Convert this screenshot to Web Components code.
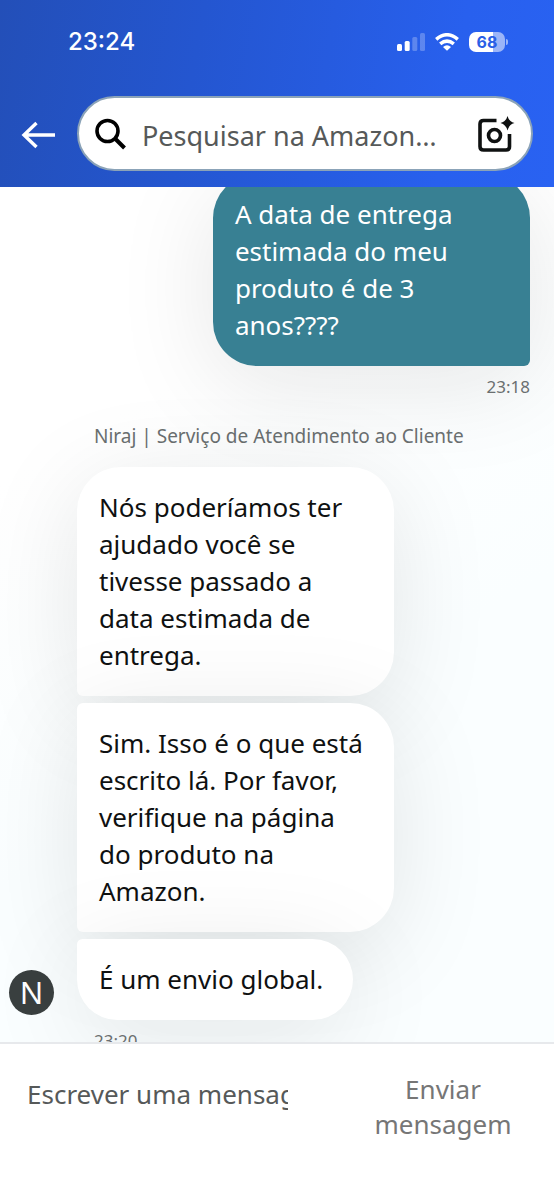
<!DOCTYPE html>
<html lang="pt-BR">
<head>
<meta charset="utf-8">
<meta name="viewport" content="width=device-width, initial-scale=1">
<title>Atendimento ao Cliente</title>
<style>
html, body { height: 100%; }
body { margin: 0; font-family: "Noto Sans", "Open Sans", sans-serif; color: #0f1111; background: #fff; }
</style>
</head>
<body>
<chat-app>
  <app-header slot="header">
    <status-bar time="23:24" battery="68"></status-bar>
    <search-bar placeholder="Pesquisar na Amazon…"></search-bar>
  </app-header>
  <chat-log slot="log">
    <chat-group side="out" time="23:18">
      <chat-bubble kind="out">A data de entrega estimada do meu produto é de 3 anos????</chat-bubble>
    </chat-group>
    <chat-group side="in" initial="N" author="Niraj | Serviço de Atendimento ao Cliente" time="23:20">
      <chat-bubble kind="first">Nós poderíamos ter ajudado você se tivesse passado a data estimada de entrega.</chat-bubble>
      <chat-bubble kind="middle">Sim. Isso é o que está escrito lá. Por favor, verifique na página do produto na Amazon.</chat-bubble>
      <chat-bubble kind="last">É um envio global.</chat-bubble>
    </chat-group>
  </chat-log>
  <message-composer slot="composer"></message-composer>
</chat-app>

<script>
const define = (name, render, ready) => customElements.define(name, class extends HTMLElement {
  connectedCallback() {
    if (this.shadowRoot) return;
    this.attachShadow({ mode: "open" }).innerHTML = render(this);
    if (ready) ready(this);
  }
});

define("chat-app", () => `
<style>
  :host { display: flex; flex-direction: column; height: 100vh; overflow: hidden; }
  main { flex: 1; min-height: 0; display: flex; flex-direction: column;
    background: linear-gradient(150deg, #fff 25%, #fafeff 60%); }
</style>
<slot name="header"></slot><main><slot name="log"></slot></main><slot name="composer"></slot>`);

define("app-header", () => `
<style>
  :host { display: block; flex: none; padding-bottom: 16px; color: #fff;
    background: linear-gradient(100deg, #234fb8 0%, #2456d0 35%, #2860ee 80%, #2962f2 100%); }
</style><slot></slot>`);

define("status-bar", el => `
<style>
  :host { display: flex; justify-content: space-between; align-items: center; height: 32px;
    padding: 26px 46px 38px 68px; font: 500 24px/32px Inter, sans-serif; }
  .icons { display: flex; align-items: center; gap: 10px; }
  svg { display: block; }
  .battery { display: flex; align-items: center; gap: 1px; }
  .level { width: 36px; height: 20px; border-radius: 7px; text-align: center; color: #2a5fe6;
    font: 700 16px/20px Inter, sans-serif; background: linear-gradient(90deg, #fff 68%, #9bb5f8 68%); }
  .tip { width: 2px; height: 6px; border-radius: 0 2px 2px 0; background: #9bb5f8; }
</style>
<span>${el.getAttribute("time")}</span>
<span class="icons">
  <svg width="28" height="18" viewBox="0 0 28 18" fill="#fff" aria-hidden="true">
    <rect x="0" y="11" width="5" height="7" rx="1.5"/><rect x="7.7" y="8" width="5" height="10" rx="1.5"/>
    <rect x="15.3" y="4" width="5" height="14" rx="1.5" opacity=".25"/><rect x="23" y="0" width="5" height="18" rx="1.5" opacity=".25"/>
  </svg>
  <svg width="24" height="18" viewBox="0 0 24 18" fill="none" stroke="#fff" stroke-width="3.5" aria-hidden="true">
    <path d="M1.2 6.3Q12-2.8 22.8 6.3"/><path d="M5.2 10.9Q12 5.3 18.8 10.9"/>
    <path d="M12 17.8 8 13.9Q12 10.7 16 13.9Z" fill="#fff" stroke="none"/>
  </svg>
  <span class="battery"><span class="level">${el.getAttribute("battery")}</span><span class="tip"></span></span>
</span>`);

define("search-bar", el => `
<style>
  :host { display: flex; align-items: center; gap: 21px; padding: 0 21px; }
  button { flex: none; border: 0; padding: 2px 0 0; background: none; color: inherit; }
  svg { display: block; }
  form { flex: 1; min-width: 0; box-sizing: border-box; height: 75px; display: flex; align-items: center;
    padding: 0 16px; border: 2px solid #8ba3b8; border-radius: 38px; background: #fff; color: #0f1111; }
  input { flex: 1; min-width: 0; border: 0; outline: 0; margin: 0 12px 0 15px; padding: 4px 0 0; height: 40px;
    background: none; font: 27px/40px "Noto Sans", sans-serif; text-overflow: ellipsis; }
  input::placeholder { color: #565959; opacity: 1; }
</style>
<button type="button" aria-label="Voltar">
  <svg width="35" height="28" viewBox="0 0 35 28" fill="none" stroke="#fff" stroke-width="3.4">
    <path d="M34 14H3M15.5 2 3 14l12.5 12"/>
  </svg>
</button>
<form role="search">
  <svg width="32" height="32" viewBox="0 0 32 32" fill="none" stroke="#000" stroke-width="3.6" aria-hidden="true">
    <circle cx="12.5" cy="13" r="10.5"/><path d="m20 20.5 9.500 9.500" stroke-width="4"/>
  </svg>
  <input type="search" aria-label="Pesquisar" placeholder="${el.getAttribute("placeholder")}">
  <button type="button" aria-label="Pesquisar com a câmera">
    <svg width="38" height="38" viewBox="0 0 38 38" fill="none" stroke="#0f1111" stroke-width="3.6">
      <path d="M19.5 4.500H6.500Q3 4.500 3 8V30.500Q3 34 6.500 34H29Q32.500 34 32.500 30.500V18"/>
      <circle cx="17.500" cy="19.500" r="6"/>
      <path d="M30.500 0Q32 5.500 37.500 7 32 8.500 30.500 14.500 29 8.500 23.500 7 29 5.500 30.500 0Z" fill="#0f1111" stroke="none"/>
    </svg>
  </button>
</form>`);

define("chat-log", () => `
<style>
  :host { display: block; flex: 1; min-height: 0; overflow: auto; scrollbar-width: none; }
  section { display: flex; flex-direction: column; gap: 25px; padding-bottom: 24px; overflow: hidden; }
</style><section><slot></slot></section>`,
el => requestAnimationFrame(() => { el.scrollTop = 13; }));

define("chat-group", el => `
<style>
  :host { display: grid; grid-template-columns: 45px minmax(0, 1fr); column-gap: 23px; padding: 0 24px 0 9px; }
  .author, .bubbles, time { grid-column: 2; }
  .bubbles { display: flex; flex-direction: column; align-items: flex-start; gap: 7px; }
  :host([side=out]) .bubbles { align-items: flex-end; }
  .author, time { font-size: 19px; line-height: 24px; color: #6a6f70; padding-left: 17px; }
  .author { margin-bottom: 19px; }
  time { margin-top: 9px; font-size: 17px; }
  :host([side=out]) time { text-align: right; }
  .avatar { grid-column: 1; align-self: end; height: 45px; margin-bottom: 5px; border-radius: 50%;
    background: #3a4040; color: #fff; text-align: center; font-size: 31px; line-height: 45px; }
</style>
${el.hasAttribute("author") ? `<div class="author">${el.getAttribute("author")}</div><div class="avatar">${el.getAttribute("initial")}</div>` : ""}
<div class="bubbles"><slot></slot></div>
<time>${el.getAttribute("time")}</time>`);

define("chat-bubble", () => `
<style>
  :host { display: block; box-sizing: border-box; min-width: 61%; max-width: 70%; padding: 22px;
    border-radius: 44px 44px 44px 6px; background: #fff; font-size: 26px; line-height: 37px;
    box-shadow: 0 18px 100px rgba(15, 17, 17, .1); }
  :host([kind=out]) { border-radius: 44px 44px 6px 44px; background: #388093; color: #fff; }
  :host([kind=middle]) { border-radius: 6px 44px 44px 6px; }
  :host([kind=last]) { border-radius: 6px 44px 44px 44px; }
</style><slot></slot>`);

define("message-composer", () => `
<style>
  :host { display: block; flex: none; border-top: 2px solid #e7e9ec; background: #fff; }
  form { display: flex; align-items: flex-start; justify-content: space-between; gap: 77px; padding: 28px 33px 58px 27px; }
  input { flex: 1; min-width: 0; border: 0; outline: 0; margin: 4px 0 0; padding: 0; height: 36px;
    background: none; font: 26px/36px "Noto Sans", sans-serif; }
  input::placeholder { color: #565959; opacity: 1; }
  button { flex: none; width: 156px; border: 0; padding: 0; background: none; color: #767676;
    font: 26px/35px "Noto Sans", sans-serif; }
</style>
<form>
  <input type="text" aria-label="Mensagem" placeholder="Escrever uma mensagem">
  <button type="button">Enviar mensagem</button>
</form>`);
</script>
</body>
</html>
